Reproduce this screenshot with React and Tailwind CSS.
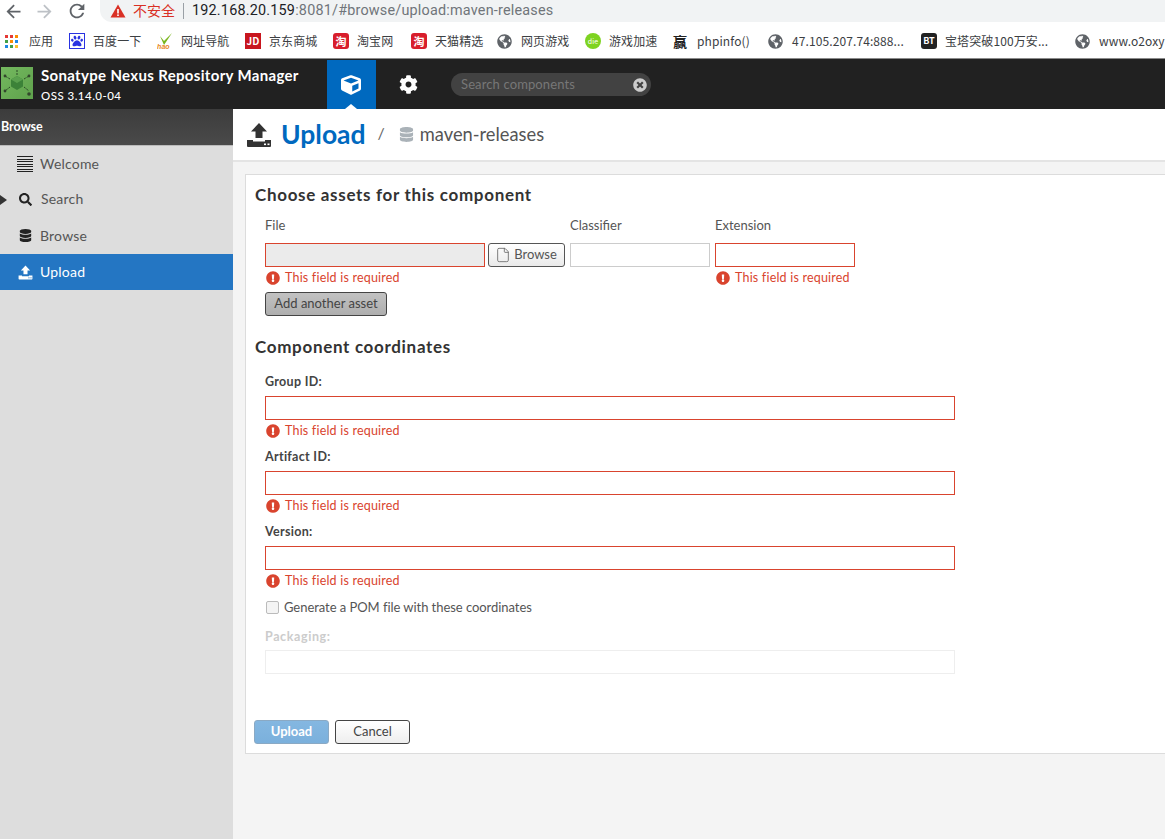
import { FaCube, FaCog, FaDatabase, FaSearch, FaExclamationCircle, FaTimesCircle, FaGlobeAmericas, FaPaw } from "react-icons/fa";
import { MdArrowBack, MdArrowForward, MdRefresh } from "react-icons/md";
import { File } from "lucide-react";

const CJK = "font-['Noto_Sans_CJK_SC','Noto_Sans',sans-serif]";

const UploadIcon = ({ size = 26, color = "#333", hole = "#fff" }) => (
  <svg width={size} height={size} viewBox="0 0 26 26" fill={color}>
    <path d="M13 1 L21 9.5 H16.5 V16 H9.5 V9.5 H5 Z" />
    <path d="M1 18 H7 V19.5 H19 V18 H25 V24 Q25 25 24 25 H2 Q1 25 1 24 Z" />
    <rect x="18" y="21.5" width="2" height="1.6" fill={hole} />
    <rect x="21.5" y="21.5" width="2" height="1.6" fill={hole} />
  </svg>
);

const Logo = () => (
  <div className="w-8 h-8 ml-px bg-gradient-to-br from-[#74b85f] to-[#5fa24c]">
    <svg width="32" height="32" viewBox="0 0 32 32">
      <path d="M16 9 L22 12.5 V19.5 L16 23 L10 19.5 V12.5 Z" fill="#3c8238" />
      <path d="M16 9 L22 12.5 L16 16 L10 12.5 Z" fill="#5aa04e" />
      <g stroke="#2b4a26" strokeWidth="1" strokeDasharray="2 1">
        <path d="M16 8 V3 M9 12 L4 9 M23 12 L28 9 M9 20 L4 24 M23 20 L28 24" />
      </g>
      <circle cx="4" cy="9" r="1.4" fill="#33472c" />
      <circle cx="28" cy="9" r="1.4" fill="#33472c" />
      <circle cx="4" cy="24" r="1.4" fill="#33472c" />
      <circle cx="28" cy="27" r="1.8" fill="#33472c" />
    </svg>
  </div>
);

const Tao = () => (
  <span className={`w-4 h-4 rounded-[3px] bg-[#d81e2c] text-white text-[11px] leading-4 text-center font-bold ${CJK}`}>淘</span>
);

const Globe = () => <FaGlobeAmericas size={15} className="text-[#5f6368]" />;

const AppsIcon = () => (
  <span className="grid grid-cols-3 gap-[2px]">
    {["#e53935", "#e53935", "#fb8c00", "#43a047", "#fb8c00", "#1e88e5", "#1e88e5", "#43a047", "#fbc02d"].map((c, i) => (
      <span key={i} className="w-[3px] h-[3px]" style={{ backgroundColor: c }} />
    ))}
  </span>
);

const HaoIcon = () => (
  <svg width="17" height="16" viewBox="0 0 17 16">
    <path d="M3 3 L7 8 L15 0 L7 12 Z" fill="#7ab51d" />
    <text x="0" y="16" fontSize="7" fontWeight="700" fontStyle="italic" fill="#e8851c" fontFamily="Liberation Sans">hao</text>
  </svg>
);

const bookmarks = [
  { w: 64, icon: <AppsIcon />, label: "应用" },
  { w: 88, icon: <span className="w-4 h-4 border border-[#2932e1] flex items-center justify-center"><FaPaw size={12} className="text-[#2932e1]" /></span>, label: "百度一下" },
  { w: 88, icon: <HaoIcon />, label: "网址导航" },
  { w: 88, icon: <span className="w-4 h-4 bg-[#c8161e] text-white text-[10px] leading-4 text-center font-bold">JD</span>, label: "京东商城" },
  { w: 78, icon: <Tao />, label: "淘宝网" },
  { w: 86, icon: <Tao />, label: "天猫精选" },
  { w: 88, icon: <Globe />, label: "网页游戏" },
  { w: 88, icon: <span className="w-4 h-4 rounded-full bg-[#7ed321] text-white text-[7px] leading-4 text-center">die</span>, label: "游戏加速" },
  { w: 95, icon: <span className={`w-[14px] text-[14px] leading-none font-bold text-[#222] ${CJK}`}>赢</span>, label: "phpinfo()" },
  { w: 153, icon: <Globe />, label: "47.105.207.74:888..." },
  { w: 154, icon: <span className="w-4 h-4 rounded-[3px] bg-[#222] text-white text-[9px] leading-4 text-center font-bold">BT</span>, label: "宝塔突破100万安..." },
  { w: 100, icon: <Globe />, label: "www.o2oxy" },
];

const BrowserBar = () => (
  <div className="shrink-0 bg-white">
    <div className="h-[22px] flex items-center">
      <MdArrowBack size={21} className="ml-[3px] text-[#5f6368]" />
      <MdArrowForward size={21} className="ml-[10px] text-[#bdc1c6]" />
      <MdRefresh size={22} className="ml-[11px] text-[#5f6368]" />
      <div className="ml-[12px] flex-1 h-[22px] -mt-[1px] bg-[#f1f3f4] rounded-bl-[12px] flex items-center pl-[10px]">
        <svg width="16" height="14" viewBox="0 0 16 14">
          <path d="M8 0.5 L15.5 13.5 H0.5 Z" fill="#d93025" />
          <rect x="7.2" y="5" width="1.6" height="4.5" fill="#fff" />
          <rect x="7.2" y="10.4" width="1.6" height="1.6" fill="#fff" />
        </svg>
        <span className={`ml-[7px] text-[14px] text-[#d93025] ${CJK}`}>不安全</span>
        <span className="ml-[8px] h-[16px] w-px bg-[#9aa0a6]" />
        <span className="ml-[8px] text-[14.4px] font-['Roboto',sans-serif] tracking-[0.2px] text-[#202124]">
          192.168.20.159<span className="text-[#70757a]">:8081/#browse/upload:maven-releases</span>
        </span>
      </div>
    </div>
    <div className={`h-[36px] pt-[2px] pl-[5px] flex items-center overflow-hidden whitespace-nowrap tracking-[0.1px] ${CJK}`}>
      {bookmarks.map((b, i) => (
        <div key={i} className="shrink-0 flex items-center text-[12px] text-[#3c4043]" style={{ width: b.w }}>
          <span className="w-6 shrink-0 flex items-center">{b.icon}</span>
          <span>{b.label}</span>
        </div>
      ))}
    </div>
  </div>
);

const Header = () => (
  <div className="shrink-0 h-[51px] border-t border-[#8a8a8a] bg-[#212121] flex font-['Lato',sans-serif]">
    <div className="w-[327px] flex items-start pt-[8px]">
      <Logo />
      <div className="ml-2 text-white">
        <div className="text-[15px] leading-[18px] font-bold whitespace-nowrap tracking-[0.33px] -mt-[1px]">Sonatype Nexus Repository Manager</div>
        <div className="text-[11.5px] leading-[18px] font-medium tracking-[0.47px] mt-[3px]">OSS 3.14.0-04</div>
      </div>
    </div>
    <div className="relative w-[49px] mt-px bg-[#0069bf] flex items-center justify-center pr-[2px] text-white">
      <FaCube size={20} />
      <span className="absolute bottom-0 left-[18px] border-x-[6px] border-x-transparent border-b-[5px] border-b-white" />
    </div>
    <div className="w-[65px] flex items-center justify-center text-white">
      <FaCog size={19} />
    </div>
    <div className="ml-[10px] w-[200px] h-[23px] mt-[14px] rounded-full bg-[#424242] flex items-center justify-between pl-[10px] pr-[4px]">
      <span className="text-[13px] text-[#777] tracking-[0.12px]">Search components</span>
      <FaTimesCircle size={14} className="text-[#ccc]" />
    </div>
  </div>
);

const Welcome = () => (
  <span className="w-4 flex flex-col gap-[1.5px]">
    {[0, 1, 2, 3, 4, 5, 6].map((i) => <span key={i} className="h-px bg-[#222]" />)}
  </span>
);

const NavItem = ({ icon, label, active, arrow, h = 36, labelClass = "ml-[7px] -mt-[2px]" }) => (
  <div className={`relative flex items-center pl-[17px] ${active ? "bg-[#2476c3] text-white" : "text-[#555]"}`} style={{ height: h }}>
    {arrow && <span className="absolute left-0 border-y-[5px] border-y-transparent border-l-[7px] border-l-[#333]" />}
    <span className="w-4 flex justify-center">{icon}</span>
    <span className={`${labelClass} text-[14px] tracking-[0.2px]`}>{label}</span>
  </div>
);

const Sidebar = () => (
  <div className="w-[233px] shrink-0 bg-[#dddddd] font-['Lato',sans-serif]">
    <div className="h-[37px] pl-px flex items-center bg-gradient-to-b from-[#3c3c3c] to-[#4a4a4a] border-b border-[#bbb] text-white text-[12.5px] font-bold">Browse</div>
    <NavItem icon={<Welcome />} label="Welcome" />
    <NavItem icon={<FaSearch size={13} className="text-[#222]" />} label="Search" arrow h={35} labelClass="ml-[8px] -mt-[2px]" />
    <NavItem icon={<FaDatabase size={13} className="text-[#222]" />} label="Browse" h={37} labelClass="ml-[7px]" />
    <NavItem icon={<UploadIcon size={15} color="#fff" hole="#2476c3" />} label="Upload" active />
  </div>
);

const Err = () => (
  <div className="h-[20px] pt-[2px] flex items-center text-[12.5px] text-[#d9442e] tracking-[0.2px]">
    <FaExclamationCircle size={14} className="shrink-0 ml-px mr-[5px]" />
    This field is required
  </div>
);

const FieldBlock = ({ label }) => (
  <div className="mb-[9px]">
    <div className="text-[12.5px] leading-[16px] font-bold text-[#444] mb-[6px] tracking-[0.3px]">{label}</div>
    <div className="w-[690px] h-[24px] border border-[#d9442e] bg-white" />
    <Err />
  </div>
);

const headingClass = "text-[17px] leading-[20px] font-bold text-[#333] tracking-[0.68px]";

const Panel = () => (
  <div className="ml-[12px] mt-[12px] h-[580px] border border-[#dcdcdc] border-r-0 bg-white relative text-[#444]">
    <div className="pl-[9px] pt-[10px]">
      <h2 className={headingClass}>Choose assets for this component</h2>
      <div className="pl-[10px]">
        <div className="mt-[12px] flex text-[13px] leading-[16px] text-[#555]">
          <span className="w-[305px]">File</span>
          <span className="w-[145px]">Classifier</span>
          <span>Extension</span>
        </div>
        <div className="mt-[10px] flex items-start">
          <div>
            <div className="flex">
              <div className="w-[220px] h-[24px] border border-[#d9442e] bg-[#ebebeb]" />
              <button className="ml-[3px] w-[77px] h-[24px] border border-[#555] rounded-[3px] bg-gradient-to-b from-[#fff] to-[#eaeaea] flex items-center justify-center gap-[3px] pr-[1px] text-[13px] text-[#555]">
                <File size={16} strokeWidth={1.25} className="text-[#666]" /> Browse
              </button>
            </div>
            <Err />
          </div>
          <div className="ml-[5px] w-[140px] h-[24px] border border-[#ccc] bg-white" />
          <div className="ml-[5px]">
            <div className="w-[140px] h-[24px] border border-[#d9442e] bg-white" />
            <Err />
          </div>
        </div>
        <button className="mt-[5px] block w-[122px] h-[24px] border border-[#444] rounded-[3px] bg-gradient-to-b from-[#c2c2c2] to-[#aeaeae] text-[13px] text-[#444]">Add another asset</button>
      </div>
      <h2 className={`mt-[21px] ${headingClass}`}>Component coordinates</h2>
      <div className="pl-[10px] mt-[17px]">
        <FieldBlock label="Group ID:" />
        <FieldBlock label="Artifact ID:" />
        <FieldBlock label="Version:" />
        <div className="-mt-[1px] ml-px flex items-center gap-[5px] text-[13px] tracking-[-0.05px] text-[#555]">
          <span className="w-[13px] h-[13px] rounded-[2px] border border-[#bbb] bg-[#f4f4f4]" />
          Generate a POM file with these coordinates
        </div>
        <div className="mt-[11px] text-[12.5px] leading-[16px] font-bold text-[#ccc] tracking-[0.6px]">Packaging:</div>
        <div className="mt-[5px] w-[690px] h-[24px] border border-[#eee] bg-white" />
      </div>
    </div>
    <div className="absolute left-[8px] bottom-[9px] flex gap-[6px] text-[13px]">
      <button className="w-[75px] h-[24px] rounded-[3px] border border-[#8aa9c4] bg-gradient-to-b from-[#84b7e1] to-[#7bb0dc] text-white font-bold">Upload</button>
      <button className="w-[75px] h-[24px] rounded-[3px] border border-[#444] bg-gradient-to-b from-white to-[#eee] text-[#444]">Cancel</button>
    </div>
  </div>
);

const Content = () => (
  <div className="flex-1 bg-[#f4f4f4] font-['Lato',sans-serif] min-w-0 overflow-hidden">
    <div className="h-[53px] bg-white border-b-2 border-[#e4e4e4] flex items-center pl-[13px]">
      <UploadIcon />
      <span className="ml-[9px] text-[26.5px] font-bold text-[#0069bf]">Upload</span>
      <span className="ml-[12px] text-[16px] text-[#666] -mt-[3px]">/</span>
      <FaDatabase size={15} className="ml-[14px] text-[#aab2b8]" />
      <span className="ml-[6px] text-[18.3px] text-[#555]">maven-releases</span>
    </div>
    <Panel />
  </div>
);

export default function App() {
  return (
    <div className="w-[1165px] h-[839px] overflow-hidden flex flex-col">
      <BrowserBar />
      <Header />
      <div className="flex-1 flex min-h-0">
        <Sidebar />
        <Content />
      </div>
    </div>
  );
}
